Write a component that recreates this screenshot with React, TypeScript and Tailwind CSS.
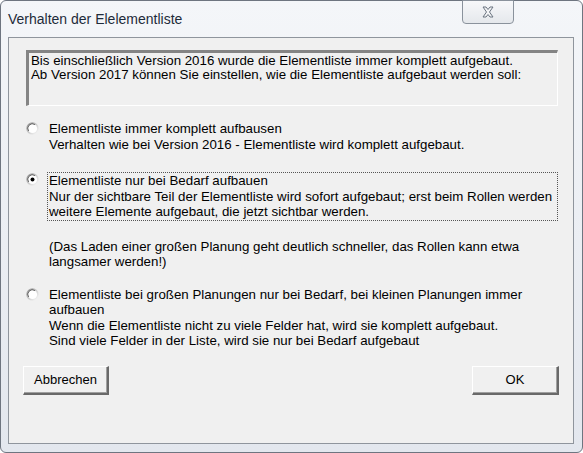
import React from "react";

const font = { fontFamily: '"Liberation Sans", Arial, sans-serif' };

function Radio({ checked }: { checked?: boolean }) {
  const id = checked ? "rg1" : "rg0";
  return (
    <svg width="13" height="13" viewBox="0 0 13 13" className="shrink-0">
      <defs>
        <linearGradient id={id} x1="0" y1="0" x2="1" y2="1">
          <stop offset="0" stopColor="#8a8a8a" />
          <stop offset="0.6" stopColor="#d8d8d8" />
          <stop offset="1" stopColor="#ffffff" />
        </linearGradient>
      </defs>
      <circle cx="6.5" cy="6.5" r="6.2" fill={`url(#${id})`} />
      <circle cx="6.5" cy="6.5" r="4.6" fill="#ffffff" />
      <path d="M2.6 9 A4.6 4.6 0 0 1 9 2.6" fill="none" stroke="#5a5a5a" strokeWidth="0.9" />
      {checked && <circle cx="6.5" cy="6.5" r="2" fill="#000" />}
    </svg>
  );
}

export default function App() {
  return (
    <div className="w-[583px] h-[453px] overflow-hidden" style={font}>
      <div className="w-[583px] h-[453px] flex flex-col border border-[#6e7580] rounded-b-[6px] rounded-t-[6px] bg-gradient-to-b from-[#f4f6f9] to-[#e3e7ee]">
        <div className="h-[36px] flex items-start relative">
          <div className="pl-[7px] pt-[8px] text-[14px] text-[#1e2b3a]">Verhalten der Elelementliste</div>
          <div className="absolute left-[461px] top-[-1px] w-[52px] h-[24px] border border-[#8a929c] rounded-b-[4px] bg-gradient-to-b from-[#f7f8fa] to-[#e5e8ec] flex items-center justify-center">
            <svg width="14" height="12" viewBox="0 0 14 12">
              <path d="M2 1 L5 1 L7 3.5 L9 1 L12 1 L8.5 6 L12 11 L9 11 L7 8.5 L5 11 L2 11 L5.5 6 Z" fill="#f3f4f6" stroke="#6b7480" strokeWidth="1" strokeLinejoin="round" />
            </svg>
          </div>
        </div>
        <div className="ml-[7px] mr-[8px] mb-[8px] flex-1 border border-[#8f959d] bg-[#f0f0f0] text-[13.3px] text-black leading-[15.5px]">
          <div className="ml-[17px] mt-[12px] w-[532px] h-[56px] border-t-[3px] border-l-[3px] border-t-[#848484] border-l-[#848484] border-b border-r border-b-white border-r-white pl-[2px] pt-[1px] leading-[14px] whitespace-nowrap">
            Bis einschließlich Version 2016 wurde die Elementliste immer komplett aufgebaut.
            <br />
            Ab Version 2017 können Sie einstellen, wie die Elementliste aufgebaut werden soll:
          </div>

          <div className="mt-[15px] ml-[17px] flex items-start whitespace-nowrap">
            <div className="mt-[1px]"><Radio /></div>
            <div className="ml-[10px]">
              Elementliste immer komplett aufbausen
              <br />
              Verhalten wie bei Version 2016 - Elementliste wird komplett aufgebaut.
            </div>
          </div>

          <div className="mt-[20px] ml-[17px] flex items-start whitespace-nowrap">
            <div className="mt-[1px]"><Radio checked /></div>
            <div className="ml-[8px] w-[511px] border border-dotted border-[#555] pl-[1px]">
              Elementliste nur bei Bedarf aufbauen
              <br />
              Nur der sichtbare Teil der Elementliste wird sofort aufgebaut; erst beim Rollen werden
              <br />
              weitere Elemente aufgebaut, die jetzt sichtbar werden.
            </div>
          </div>

          <div className="mt-[18px] ml-[40px] whitespace-nowrap leading-[15px]">
            (Das Laden einer großen Planung geht deutlich schneller, das Rollen kann etwa
            <br />
            langsamer werden!)
          </div>

          <div className="mt-[18px] ml-[17px] flex items-start whitespace-nowrap">
            <div className="mt-[1px]"><Radio /></div>
            <div className="ml-[10px]">
              Elementliste bei großen Planungen nur bei Bedarf, bei kleinen Planungen immer
              <br />
              aufbauen
              <br />
              Wenn die Elementliste nicht zu viele Felder hat, wird sie komplett aufgebaut.
              <br />
              Sind viele Felder in der Liste, wird sie nur bei Bedarf aufgebaut
            </div>
          </div>

          <div className="mt-[17px] mx-[14px] flex justify-between">
            <button className="w-[86px] h-[29px] border border-t-white border-l-white border-r-[#696969] border-b-[#696969] border-r-2 border-b-2 bg-[#f0f0f0] text-[13px] shadow-[inset_-1px_-1px_0_#a0a0a0]">
              Abbrechen
            </button>
            <button className="w-[87px] h-[29px] border border-t-white border-l-white border-r-[#696969] border-b-[#696969] border-r-2 border-b-2 bg-[#f0f0f0] text-[13px] shadow-[inset_-1px_-1px_0_#a0a0a0]">
              OK
            </button>
          </div>
        </div>
      </div>
    </div>
  );
}
